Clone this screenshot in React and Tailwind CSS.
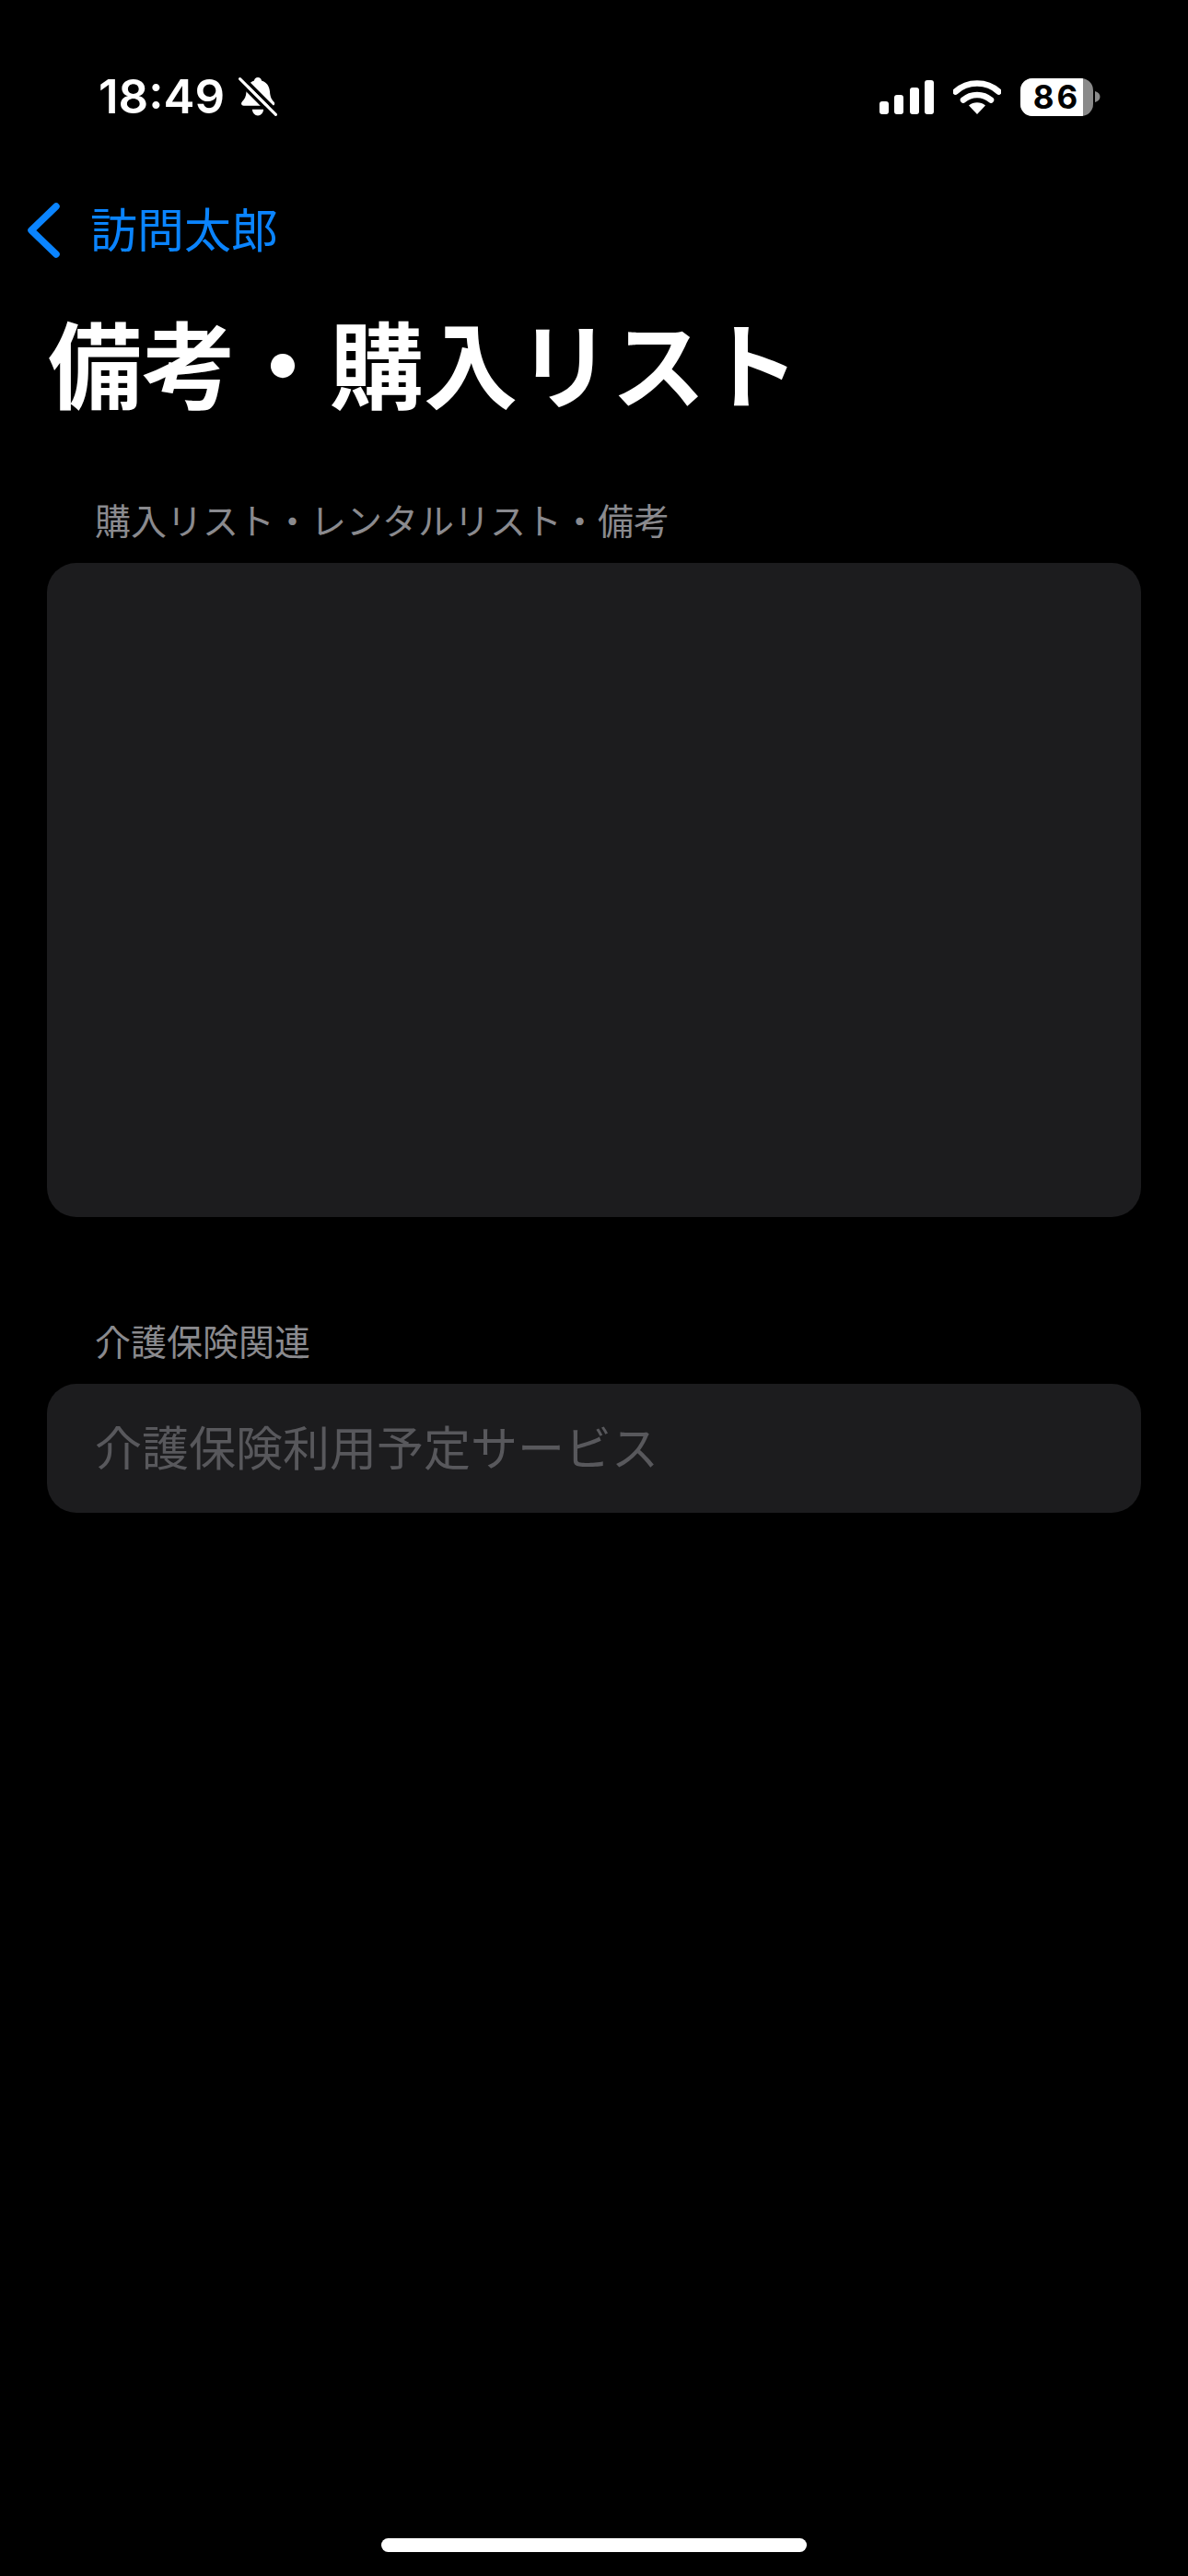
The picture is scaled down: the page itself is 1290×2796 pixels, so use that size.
const font = { fontFamily: '"Noto Sans CJK JP", sans-serif' }

const StatusBar = () => (
  <div className="flex items-center justify-between h-[50px] pl-[107px] pr-[95px] mt-[80px]">
    <div className="flex items-center gap-[15px]">
      <span className="text-white text-[51px] leading-[50px] font-semibold font-['Inter',sans-serif]">18:49</span>
      <svg width="42" height="45" viewBox="0 0 40 44" fill="none">
        <path d="M20 1c2.200 0 3.600 1.500 3.900 3.400 5.400 1.500 8.300 6 8.800 11.700.4 5.200 1.600 8 4.300 10.700 1.500 1.500.9 4.200-1.500 4.200H5c-2.600 0-3.300-2.800-1.600-4.400 2.800-2.700 4-5.500 4.400-10.500.4-5.700 3.400-10.200 8.300-11.700C16.400 2.500 17.800 1 20 1z" fill="white" />
        <path d="M14 35h12c-.3 3.700-2.800 6.500-6 6.500S14.300 38.700 14 35z" fill="white" />
        <path d="M4 1l37 37" stroke="black" strokeWidth="3.500" />
        <path d="M-1 5l37 37" stroke="black" strokeWidth="3.500" />
        <path d="M1 2.500l38 38" stroke="white" strokeWidth="3" strokeLinecap="round" />
      </svg>
    </div>
    <div className="flex items-center gap-[21px]">
      <div className="flex items-end gap-[6.500px] h-[37px]">
        <div className="w-[10px] h-[14px] rounded-[3px] bg-white" />
        <div className="w-[10px] h-[21px] rounded-[3px] bg-white" />
        <div className="w-[10px] h-[29px] rounded-[3px] bg-white" />
        <div className="w-[10px] h-[37px] rounded-[3px] bg-white" />
      </div>
      <svg width="52" height="37" viewBox="0 0 52 37" fill="none">
        <path d="M2.500 12.500C15.500 .5 36.500 .5 49.500 12.500" stroke="white" strokeWidth="6.500" strokeLinecap="round" />
        <path d="M11 21.500c8.500-7.500 21.500-7.500 30 0" stroke="white" strokeWidth="6.500" strokeLinecap="round" />
        <path d="M26 37l-9-9.500c5-4.200 13-4.200 18 0z" fill="white" />
      </svg>
      <div className="flex items-center gap-[2px]">
        <div className="w-[79px] h-[41px] rounded-[13px] overflow-hidden bg-[#8a8a8a]">
          <div className="flex items-center justify-center w-[68px] h-full bg-white">
            <span className="text-black text-[35px] leading-none font-bold tracking-[3px] pl-[11px] font-['Inter',sans-serif]">86</span>
          </div>
        </div>
        <svg width="6" height="12" viewBox="0 0 6 12">
          <path d="M0 0c3.500 1 5.500 3 5.500 6S3.500 11 0 12z" fill="#8a8a8a" />
        </svg>
      </div>
    </div>
  </div>
)

const SectionLabel = ({ text, className }) => (
  <div className={`pl-[52px] text-[39px] leading-[46px] text-[#8a8a8e] ${className}`}>{text}</div>
)

export default function App() {
  return (
    <div className="flex flex-col h-[2796px] w-[1290px] bg-black overflow-hidden" style={font}>
      <StatusBar />

      <div className="flex items-center h-[60px] mt-[90px] pl-[29px]">
        <svg width="36" height="60" viewBox="0 0 36 60" fill="none">
          <path d="M32 4L5 30l27 26" stroke="#0a84ff" strokeWidth="7.500" strokeLinecap="round" strokeLinejoin="round" />
        </svg>
        <span className="ml-[33px] pb-[6px] text-[51px] leading-[60px] text-[#0a84ff]">訪問太郎</span>
      </div>

      <h1 className="mt-[52px] pl-[52px] text-[102px] leading-[120px] font-bold text-white">備考・購入リスト</h1>

      <div className="flex flex-col pl-[51px] pr-[51px]">
        <SectionLabel text="購入リスト・レンタルリスト・備考" className="mt-[88px]" />
        <div className="mt-[25px] h-[710px] rounded-[32px] bg-[#1c1c1e]" />

        <SectionLabel text="介護保険関連" className="mt-[110px]" />
        <div className="flex items-center mt-[25px] h-[140px] pl-[52px] pb-[6px] rounded-[32px] bg-[#1c1c1e]">
          <span className="text-[51px] leading-[60px] text-[#58585c]">介護保険利用予定サービス</span>
        </div>
      </div>

      <div className="mt-auto mb-[26px] mx-auto w-[462px] h-[15px] rounded-full bg-white" />
    </div>
  )
}
